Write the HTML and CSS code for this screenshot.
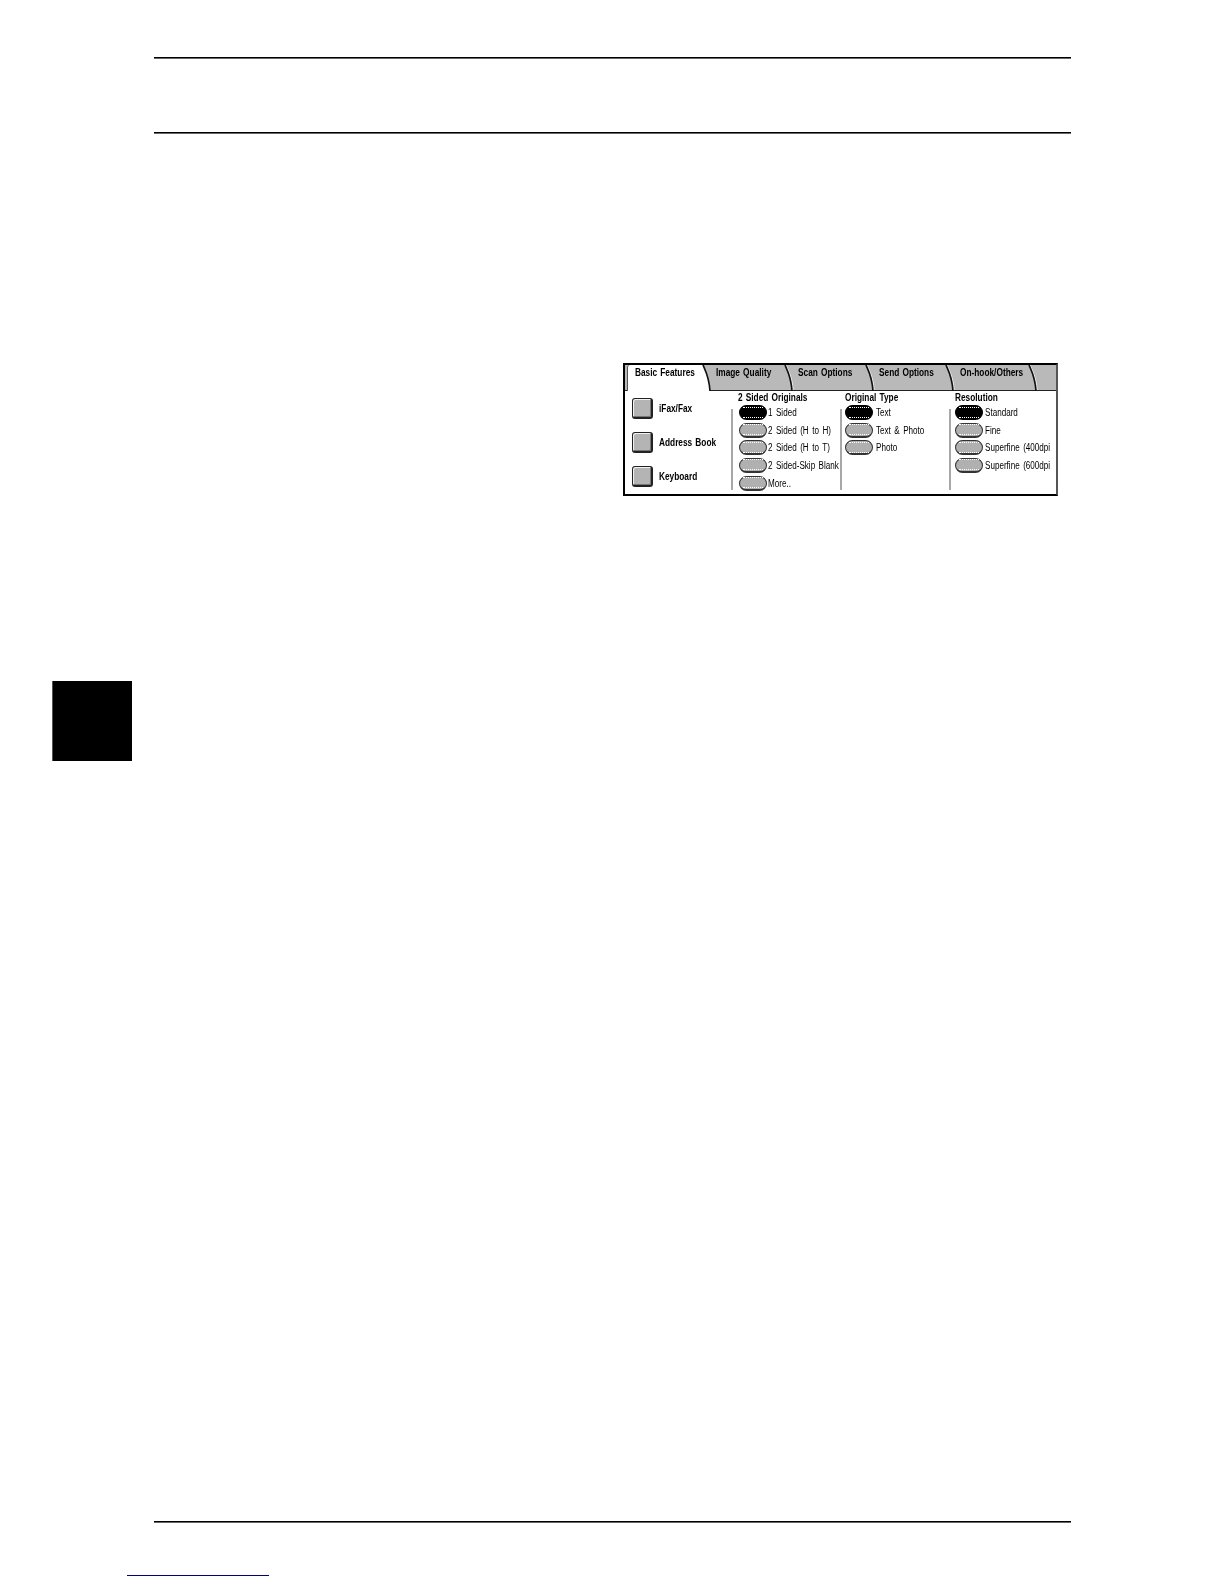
FILE: index.html
```html
<!DOCTYPE html>
<html lang="en">
<head>
<meta charset="utf-8">
<title>Basic Features</title>
<link rel="stylesheet" href="styles.css">
</head>
<body>
<main class="page">
  <hr class="rule rule-first">
  <hr class="rule rule-second">
  <section class="panel">
    <nav class="tabs">
      <div class="tab tab-active tab-1"><span class="bold-label">Basic Features</span>
        <svg class="slant" viewBox="0 0 10 26"><path class="slant-fill" d="M0 0H1C3 5 7 11 8 26H0Z"/><path class="slant-line" d="M1 0C3 5 7 11 8 26"/></svg></div>
      <div class="tab tab-2"><span class="bold-label">Image Quality</span>
        <svg class="slant" viewBox="0 0 10 26"><path class="slant-light" d="M2.2 0C4 5 8 11 9.2 25"/><path class="slant-line" d="M1 0C3 5 7 11 8 26"/></svg></div>
      <div class="tab tab-3"><span class="bold-label">Scan Options</span>
        <svg class="slant" viewBox="0 0 10 26"><path class="slant-light" d="M2.2 0C4 5 8 11 9.2 25"/><path class="slant-line" d="M1 0C3 5 7 11 8 26"/></svg></div>
      <div class="tab tab-4"><span class="bold-label">Send Options</span>
        <svg class="slant" viewBox="0 0 10 26"><path class="slant-light" d="M2.2 0C4 5 8 11 9.2 25"/><path class="slant-line" d="M1 0C3 5 7 11 8 26"/></svg></div>
      <div class="tab tab-5"><span class="bold-label">On-hook/Others</span>
        <svg class="slant" viewBox="0 0 10 26"><path class="slant-light" d="M2.2 0C4 5 8 11 9.2 25"/><path class="slant-line" d="M1 0C3 5 7 11 8 26"/></svg></div>
    </nav>
    <div class="panel-body">
      <div class="actions">
        <div class="action"><span class="square"></span><span class="bold-label">iFax/Fax</span></div>
        <div class="action"><span class="square"></span><span class="bold-label">Address Book</span></div>
        <div class="action"><span class="square"></span><span class="bold-label">Keyboard</span></div>
      </div>
      <div class="group group-first">
        <span class="divider"></span>
        <div class="group-content">
          <h2 class="bold-label">2 Sided Originals</h2>
          <ul>
            <li><span class="pill pill-on"><i></i></span><span class="label">1 Sided</span></li>
            <li><span class="pill"><i></i></span><span class="label">2 Sided (H to H)</span></li>
            <li><span class="pill"><i></i></span><span class="label">2 Sided (H to T)</span></li>
            <li><span class="pill"><i></i></span><span class="label">2 Sided-Skip Blank</span></li>
            <li><span class="pill"><i></i></span><span class="label">More..</span></li>
          </ul>
        </div>
      </div>
      <div class="group group-middle">
        <span class="divider"></span>
        <div class="group-content">
          <h2 class="bold-label">Original Type</h2>
          <ul>
            <li><span class="pill pill-on"><i></i></span><span class="label">Text</span></li>
            <li><span class="pill"><i></i></span><span class="label">Text &amp; Photo</span></li>
            <li><span class="pill"><i></i></span><span class="label">Photo</span></li>
          </ul>
        </div>
      </div>
      <div class="group group-last">
        <span class="divider"></span>
        <div class="group-content">
          <h2 class="bold-label">Resolution</h2>
          <ul>
            <li><span class="pill pill-on"><i></i></span><span class="label">Standard</span></li>
            <li><span class="pill"><i></i></span><span class="label">Fine</span></li>
            <li><span class="pill"><i></i></span><span class="label">Superfine (400dpi</span></li>
            <li><span class="pill"><i></i></span><span class="label">Superfine (600dpi</span></li>
          </ul>
        </div>
      </div>
    </div>
  </section>
  <div class="chapter-mark"></div>
  <hr class="rule rule-footer">
  <div class="link-line"></div>
</main>
</body>
</html>
```
FILE: styles.css
```css
* { box-sizing: border-box; }
html, body { margin: 0; padding: 0; background: #fff; }
body { font-family: "Liberation Sans", Arial, sans-serif; color: #000; }
.page { width: 1224px; height: 1584px; padding-top: 57px; overflow: hidden; }

.rule {
  display: block;
  width: 917px;
  height: 2px;
  margin: 0 0 0 154px;
  border: 0;
  border-top: 1px solid #000;
  border-bottom: 1px solid #666;
}
.rule-second { margin-top: 73px; }
.rule-footer { margin-top: 760px; }

.panel {
  width: 435px;
  height: 133px;
  margin: 229px 0 0 623px;
  border: 2px solid #000;
  border-right-color: #555;
  background: #fff;
  display: flex;
  flex-direction: column;
  font-size: 10px;
  filter: blur(0.3px);
}

/* The panel's bitmap type is narrower than any installed face */
.bold-label, .label {
  display: block;
  white-space: nowrap;
  transform-origin: 0 50%;
}
.bold-label { font-weight: 700; transform: scaleX(0.83); word-spacing: 1px; }
.label { transform: scaleX(0.81); word-spacing: 1.5px; }

.tabs {
  display: flex;
  height: 26px;
  padding-left: 2px;
  background: #b9b9b9;
  border-bottom: 1px solid #222;
}
.tab {
  display: flex;
  align-items: flex-start;
  height: 26px;
  padding: 2px 0 0 4px;
  flex: none;
  line-height: 12px;
}
.tab .bold-label { flex: 1; min-width: 0; }
.tab-active {
  padding-left: 7px;
  border-left: 1px solid #555;
  border-top-left-radius: 3px;
  background: linear-gradient(#fff, #fff) left / calc(100% - 9px) 100% no-repeat;
}
.tab-1 { width: 85px; }
.tab-2 { width: 82px; }
.tab-3 { width: 81px; }
.tab-4 { width: 80px; }
.tab-5 { width: 83px; padding-left: 5px; }
.slant { width: 10px; height: 26px; flex: none; margin-top: -2px; }
.slant-fill { fill: #fff; }
.slant-line { fill: none; stroke: #111; stroke-width: 1.6; }
.slant-light { fill: none; stroke: #eee; stroke-width: 1; }

.panel-body { display: flex; flex: 1; min-height: 0; }
.actions {
  width: 106px;
  flex: none;
  padding: 7px 0 0 7px;
  display: flex;
  flex-direction: column;
  gap: 13px;
}
.action { display: flex; align-items: center; gap: 6px; height: 21px; }
.square {
  width: 21px;
  height: 21px;
  flex: none;
  background: #b4b4b4;
  border: 1px solid #222;
  border-right-width: 2px;
  border-bottom-width: 2px;
  border-radius: 3px;
  box-shadow: inset 1px 1px 0 #f2f2f2, inset -1px -1px 0 #777;
}

.group { display: flex; flex: none; width: 109px; }
.divider {
  width: 2px;
  margin: 18px 0 4px;
  flex: none;
  background: #a8a8a8;
}
.group-content { min-width: 0; }
.group-first .group-content { padding-left: 5px; }
.group-middle .group-content { padding-left: 3px; }
.group-last .group-content { padding-left: 4px; }
.group h2 {
  margin: 0;
  height: 14px;
  font-size: 10px;
  line-height: 14px;
}
.group ul {
  list-style: none;
  margin: 0;
  padding: 0;
  display: flex;
  flex-direction: column;
  gap: 2.65px;
}
.group li { display: flex; align-items: center; height: 15px; }
.group-first li { gap: 1px; }
.group-middle li { gap: 3px; }
.group-last li { gap: 2px; }
.group-first .pill { margin-left: 1px; }
.pill {
  width: 28px;
  height: 15px;
  flex: none;
  border: 1px solid #333;
  border-bottom: 2px solid #333;
  border-radius: 8px;
  background: #b0b0b0;
  display: flex;
  align-items: center;
  justify-content: center;
}
.pill i {
  display: block;
  width: 20px;
  height: 11px;
  border-top: 1px dotted #fff;
  border-bottom: 1px dotted #fff;
}
.pill-on { background: #000; border-color: #000; }

.chapter-mark {
  width: 80px;
  height: 80px;
  margin: 185px 0 0 52px;
  background: #000;
  border-left: 1px solid #555;
}
.link-line {
  width: 142px;
  height: 1px;
  margin: 52px 0 0 127px;
  background: #000080;
}
```
